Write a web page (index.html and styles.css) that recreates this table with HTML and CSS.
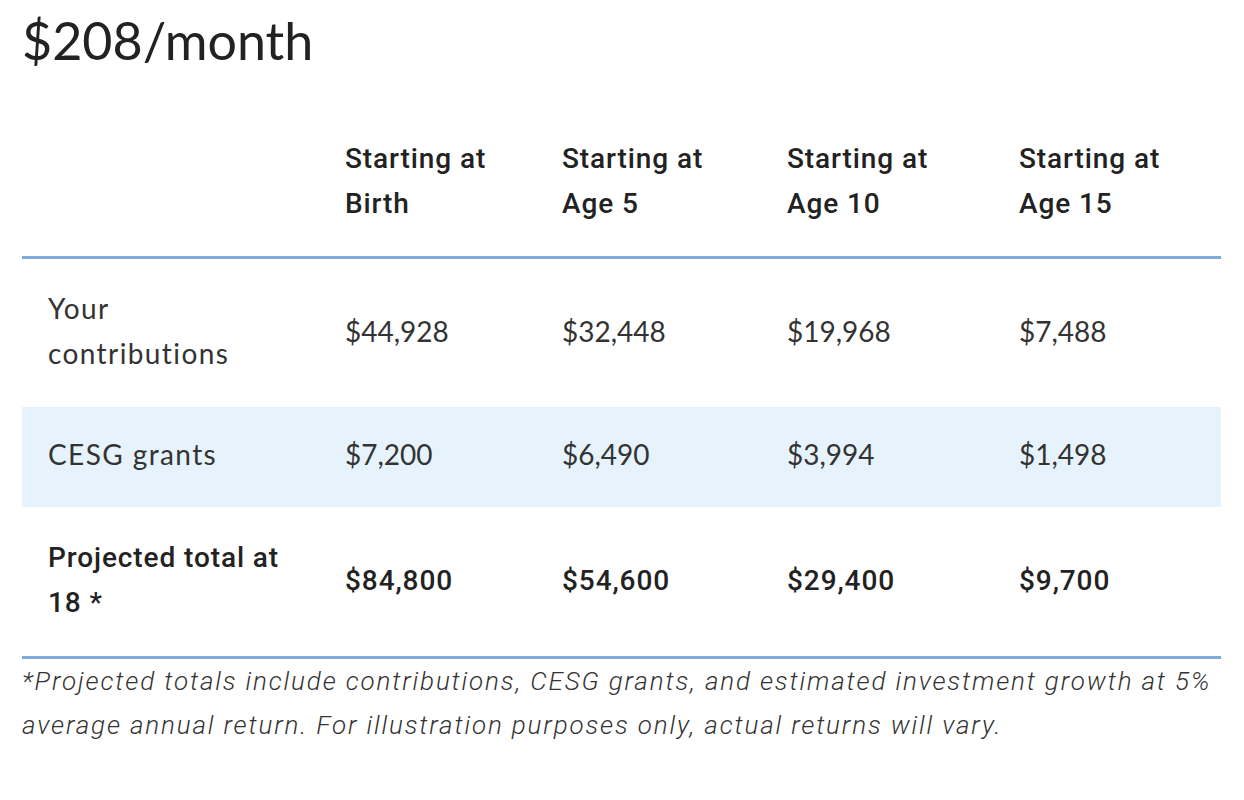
FILE: index.html
```html
<!DOCTYPE html>
<html lang="en">
<head>
<meta charset="utf-8">
<title>$208/month</title>
<link rel="stylesheet" href="styles.css">
</head>
<body>
<main class="wrap">
  <h2 class="title">$208/month</h2>
  <table class="proj">
    <colgroup>
      <col class="c1"><col class="c2"><col class="c3"><col class="c4"><col class="c5">
    </colgroup>
    <thead>
      <tr>
        <th></th>
        <th>Starting at<br>Birth</th>
        <th>Starting at<br>Age 5</th>
        <th>Starting at<br>Age 10</th>
        <th>Starting at<br>Age 15</th>
      </tr>
    </thead>
    <tbody>
      <tr>
        <td class="label">Your<br>contributions</td>
        <td>$44,928</td>
        <td>$32,448</td>
        <td>$19,968</td>
        <td>$7,488</td>
      </tr>
      <tr class="shade">
        <td class="label">CESG grants</td>
        <td>$7,200</td>
        <td>$6,490</td>
        <td>$3,994</td>
        <td>$1,498</td>
      </tr>
      <tr class="total">
        <td>Projected total at<br>18 *</td>
        <td>$84,800</td>
        <td>$54,600</td>
        <td>$29,400</td>
        <td>$9,700</td>
      </tr>
    </tbody>
  </table>
  <p class="note">*Projected totals include contributions, CESG grants, and estimated investment growth at 5% average annual return. For illustration purposes only, actual returns will vary.</p>
</main>
</body>
</html>
```

FILE: styles.css
```css
html, body {
  margin: 0;
  padding: 0;
  background: #ffffff;
}
body {
  color: #333333;
  font-family: Lato, "Noto Sans", sans-serif;
}
.wrap {
  padding: 0 22px;
  width: 1199px;
}
.title {
  margin: 0;
  padding-top: 10px;
  font-family: Lato, sans-serif;
  font-weight: 400;
  font-size: 52px;
  line-height: 60px;
  color: #222222;
  height: 100px;
}
.proj {
  width: 1199px;
  border-collapse: collapse;
  table-layout: fixed;
}
.c1 { width: 297px; }
.c2 { width: 217px; }
.c3 { width: 225px; }
.c4 { width: 232px; }
.c5 { width: 228px; }
.proj th {
  font-family: Roboto, sans-serif;
  font-weight: 500;
  font-size: 28px;
  letter-spacing: 0.9px;
  line-height: 45px;
  text-align: left;
  padding: 26px 26px 30px;
  color: #222222;
  border-bottom: 3px solid #7eaadc;
}
.proj td {
  font-family: Lato, sans-serif;
  font-size: 28px;
  line-height: 45px;
  padding: 27px 26px 31px;
  color: #333333;
}
.proj td.label {
  letter-spacing: 1.4px;
}
.proj .shade td {
  background: #e6f3fc;
  padding: 25px 26px 30px;
}
.proj .total td {
  font-family: Roboto, sans-serif;
  font-weight: 500;
  font-size: 28px;
  letter-spacing: 0.9px;
  color: #222222;
  border-bottom: 3px solid #7eaadc;
  padding: 28px 26px 31px;
}
.note {
  margin: 0;
  padding-top: 0;
  font-family: Roboto, sans-serif;
  font-weight: 300;
  font-style: italic;
  font-size: 26px;
  letter-spacing: 1.85px;
  line-height: 44px;
  color: #333333;
}
```
